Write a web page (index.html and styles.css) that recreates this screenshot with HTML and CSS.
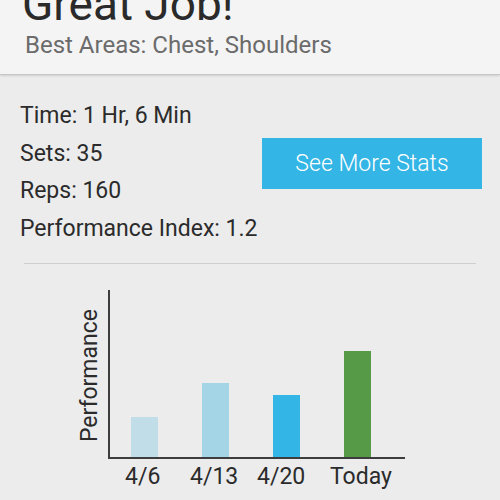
FILE: index.html
```html
<!DOCTYPE html>
<html lang="en">
<head>
  <meta charset="UTF-8" />
  <title>Workout Summary</title>
  <link rel="stylesheet" href="styles.css">
</head>
<body>
  <div class="header">
    <h1 class="title">Great Job!</h1>
    <div class="subtitle">Best Areas: Chest, Shoulders</div>
  </div>

  <div class="summary">
    <div class="stats">
      <div class="stat">Time: 1 Hr, 6 Min</div>
      <div class="stat">Sets: 35</div>
      <div class="stat">Reps: 160</div>
      <div class="stat">Performance Index: 1.2</div>
    </div>
    <button class="more">See More Stats</button>
  </div>

  <hr class="divider">

  <div class="chart">
    <div class="y-label">Performance</div>
    <div class="plot-wrap">
      <div class="plot">
        <div class="bar past" style="height: 40px"></div>
        <div class="bar recent" style="height: 74px"></div>
        <div class="bar last" style="height: 62px"></div>
        <div class="bar today" style="height: 106px"></div>
      </div>
      <div class="x-labels">
        <span>4/6</span>
        <span>4/13</span>
        <span>4/20</span>
        <span>Today</span>
      </div>
    </div>
  </div>
</body>
</html>
```

FILE: styles.css
```css
body {
  margin: 0;
  background-color: #ececec;
  font-family: Roboto, 'Noto Sans', sans-serif;
  color: #2b2b2b;
  overflow: hidden;
}

.header {
  display: flow-root;
  background-color: #f4f4f4;
  border-bottom: 1px solid #c6c6c6;
  box-shadow: 0 1px 2px rgba(0,0,0,0.12);
  height: 74px;
  padding-left: 22px;
}

.title {
  margin: -19px 0 0;
  font-size: 46px;
  line-height: 46px;
  font-weight: 400;
  color: #2a2a2a;
}

.subtitle {
  margin-top: 4px;
  margin-left: 3px;
  font-size: 24px;
  color: #6b6b6b;
}

.summary {
  display: flex;
  align-items: flex-start;
  padding: 22px 18px 0 20px;
}

.stats {
  flex: 1;
}

.stat {
  font-size: 23px;
  line-height: 37.5px;
}

.more {
  margin-top: 41px;
  width: 220px;
  height: 51px;
  border: none;
  background-color: #33b5e5;
  color: #fff;
  font-family: Roboto, sans-serif;
  font-weight: 300;
  font-size: 23px;
  cursor: pointer;
}

.divider {
  margin: 16px 24px 0;
  border: none;
  border-top: 1px solid #cfcfcf;
}

.chart {
  display: flex;
  align-items: flex-start;
  padding: 26px 0 0 76px;
}

.y-label {
  writing-mode: vertical-rl;
  transform: rotate(180deg);
  font-size: 23px;
  margin-top: 19px;
  width: 32px;
  color: #2b2b2b;
}

.plot {
  display: flex;
  align-items: flex-end;
  gap: 44px;
  width: 274px;
  height: 167px;
  padding-left: 21px;
  border-left: 2px solid #3d3d3d;
  border-bottom: 2px solid #3d3d3d;
}

.bar {
  width: 27px;
}

.past { background-color: #c0dde8; }
.recent { background-color: #a3d5e6; }
.last { background-color: #33b5e5; }
.today { background-color: #569a47; }

.x-labels {
  display: flex;
  padding: 3px 0 0 17px;
  font-size: 23px;
  line-height: 30px;
  color: #2b2b2b;
}

.x-labels span:nth-child(1) { width: 65px; }
.x-labels span:nth-child(2) { width: 67px; }
.x-labels span:nth-child(3) { width: 73px; }
```
